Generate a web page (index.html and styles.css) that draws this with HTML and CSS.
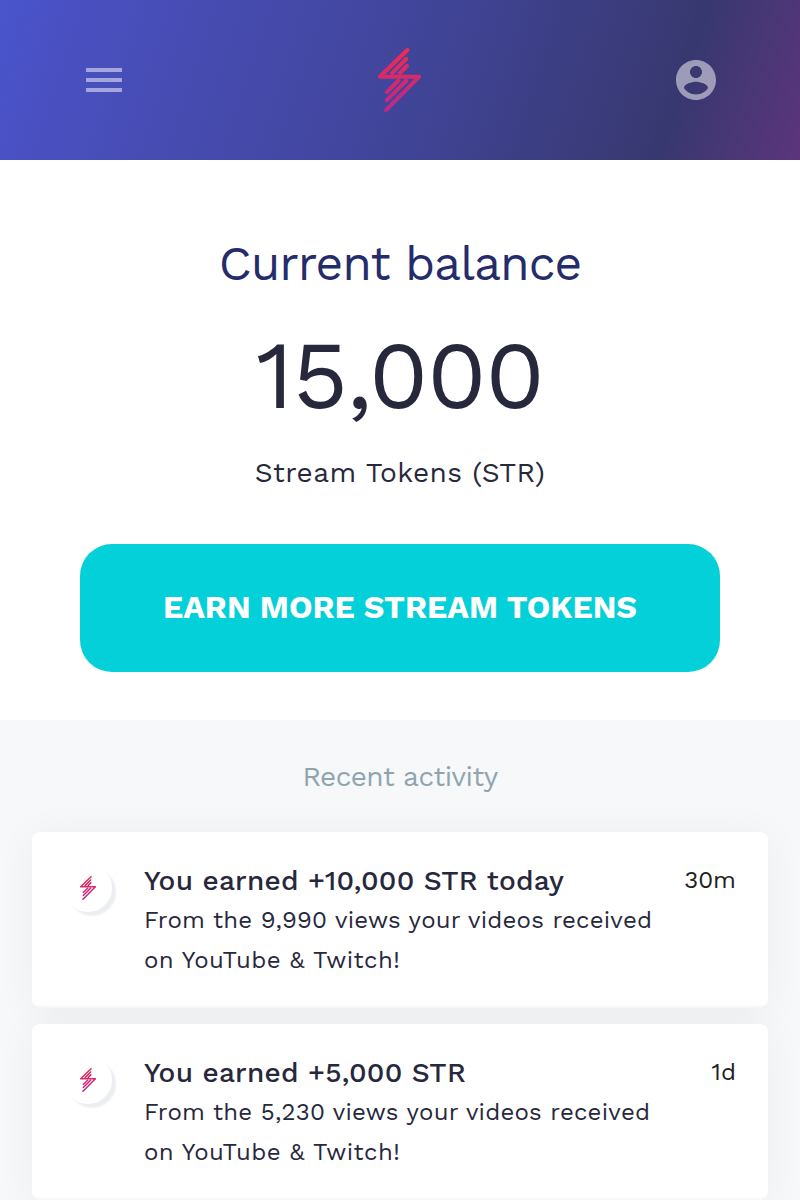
FILE: index.html
```html
<!DOCTYPE html>
<html lang="en">
<head>
<meta charset="utf-8">
<title>Stream Tokens</title>
<link rel="stylesheet" href="styles.css">
</head>
<body>
<svg class="defs" width="0" height="0" aria-hidden="true">
  <defs>
    <linearGradient id="bolt-fill" gradientUnits="userSpaceOnUse" x1="0" y1="0" x2="0" y2="64">
      <stop offset="0" stop-color="#f52a4c"/>
      <stop offset="1" stop-color="#b52a8d"/>
    </linearGradient>
    <symbol id="bolt" viewBox="0 0 44 64">
      <g fill="none" stroke="url(#bolt-fill)" stroke-width="4" stroke-linecap="round" stroke-linejoin="round">
        <path d="M29.4 2 1.8 28.700H41.200L8 62.200"/>
        <path stroke-linecap="butt" d="M28.300 10.800 12.800 26.300M29 18 20.700 26.300M8.800 44.200 21.500 31.500M8.800 52.200 29.500 31.500"/>
        <path d="M28.300 10.800v0M29 18v0M8.800 44.200v0M8.800 52.200v0"/>
      </g>
    </symbol>
  </defs>
</svg>
<header class="topbar">
  <svg class="icon" viewBox="0 0 24 24"><path d="M3 18h18v-2H3v2zm0-5h18v-2H3v2zm0-7v2h18V6H3z"/></svg>
  <svg class="logo"><use href="#bolt"/></svg>
  <svg class="icon" viewBox="0 0 24 24"><path d="M12 2C6.480 2 2 6.480 2 12s4.480 10 10 10 10-4.480 10-10S17.520 2 12 2zm0 3c1.660 0 3 1.340 3 3s-1.340 3-3 3-3-1.340-3-3 1.340-3 3-3zm0 14.200c-2.500 0-4.710-1.280-6-3.220.03-1.990 4-3.080 6-3.080 1.990 0 5.970 1.090 6 3.080-1.290 1.940-3.500 3.220-6 3.220z"/></svg>
</header>
<main>
  <section class="balance">
    <h1 class="balance-title">Current balance</h1>
    <p class="amount">15,000</p>
    <p class="unit">Stream Tokens (STR)</p>
    <button class="earn">EARN MORE STREAM TOKENS</button>
  </section>
  <section class="activity">
    <h2 class="activity-title">Recent activity</h2>
    <article class="card">
      <div class="avatar"><svg class="mini"><use href="#bolt"/></svg></div>
      <div class="body">
        <h3 class="headline">You earned +10,000 STR today</h3>
        <p class="detail">From the 9,990 views your videos received<br><span class="sources">on YouTube &amp; Twitch!</span></p>
      </div>
      <time class="age">30m</time>
    </article>
    <article class="card">
      <div class="avatar"><svg class="mini"><use href="#bolt"/></svg></div>
      <div class="body">
        <h3 class="headline">You earned +5,000 STR</h3>
        <p class="detail">From the 5,230 views your videos received<br><span class="sources">on YouTube &amp; Twitch!</span></p>
      </div>
      <time class="age">1d</time>
    </article>
  </section>
</main>
</body>
</html>
```
FILE: styles.css
```css
* { box-sizing: border-box; margin: 0; padding: 0; }
body {
  height: 1200px;
  overflow: hidden;
  background: #fff;
  color: #27283c;
  font-family: "Work Sans", Inter, sans-serif;
}
.defs { display: block; }
.topbar {
  display: flex;
  align-items: center;
  justify-content: space-between;
  height: 160px;
  padding: 0 80px;
  background: linear-gradient(108deg, #4955cd 0%, #4a50c1 9%, #41459a 50%, #383870 83.500%, #5c357c 100%);
}
.icon { width: 48px; height: 48px; fill: #fff; opacity: .5; }
.logo { width: 44px; height: 64px; }
.balance {
  display: flex;
  flex-direction: column;
  align-items: center;
  height: 560px;
  padding: 72px 80px 48px;
  white-space: nowrap;
}
.balance-title { height: 64px; font-size: 48px; line-height: 64px; font-weight: 400; color: #252c6b; letter-spacing: -1.03px; }
.amount { height: 128px; margin-top: 15px; font-size: 96px; line-height: 128px; letter-spacing: -1.400px; }
.unit { height: 40px; margin-top: 14px; font-size: 28px; line-height: 40px; letter-spacing: .4px; }
.earn {
  width: 640px;
  height: 128px;
  margin-top: 51px;
  padding-bottom: 2px;
  border: 0;
  border-radius: 32px;
  background: #03d0d8;
  color: #fff;
  font: 700 32px/126px "Work Sans", Inter, sans-serif;
}
.activity { height: 480px; padding: 37px 32px 0; background: #f6f8fa; }
.activity-title { height: 40px; margin-bottom: 35px; font-size: 28px; line-height: 40px; font-weight: 400; color: #90a4ae; text-align: center; letter-spacing: -.56px; }
.card {
  display: flex;
  height: 176px;
  margin-bottom: 16px;
  padding: 28px 32px;
  border-radius: 8px;
  border-bottom: 2px solid #f7f8f8;
  background: #fff;
  box-shadow: 0 4px 40px rgba(0, 0, 0, .05);
}
.avatar {
  display: flex;
  align-items: center;
  justify-content: center;
  width: 48px;
  height: 48px;
  margin: 4px 32px 0 0;
  border-radius: 50%;
  box-shadow: 4px 4px 2px #eceff2;
}
.mini { width: 16.5px; height: 24px; }
.body { flex: 1; white-space: nowrap; }
.headline { height: 40px; padding-top: 1px; font-size: 28px; line-height: 40px; font-weight: 500; letter-spacing: .23px; }
.detail { font-size: 24px; line-height: 40px; letter-spacing: .2px; }
.sources { letter-spacing: .43px; }
.age { font-size: 24px; line-height: 40px; color: #212121; }
```
